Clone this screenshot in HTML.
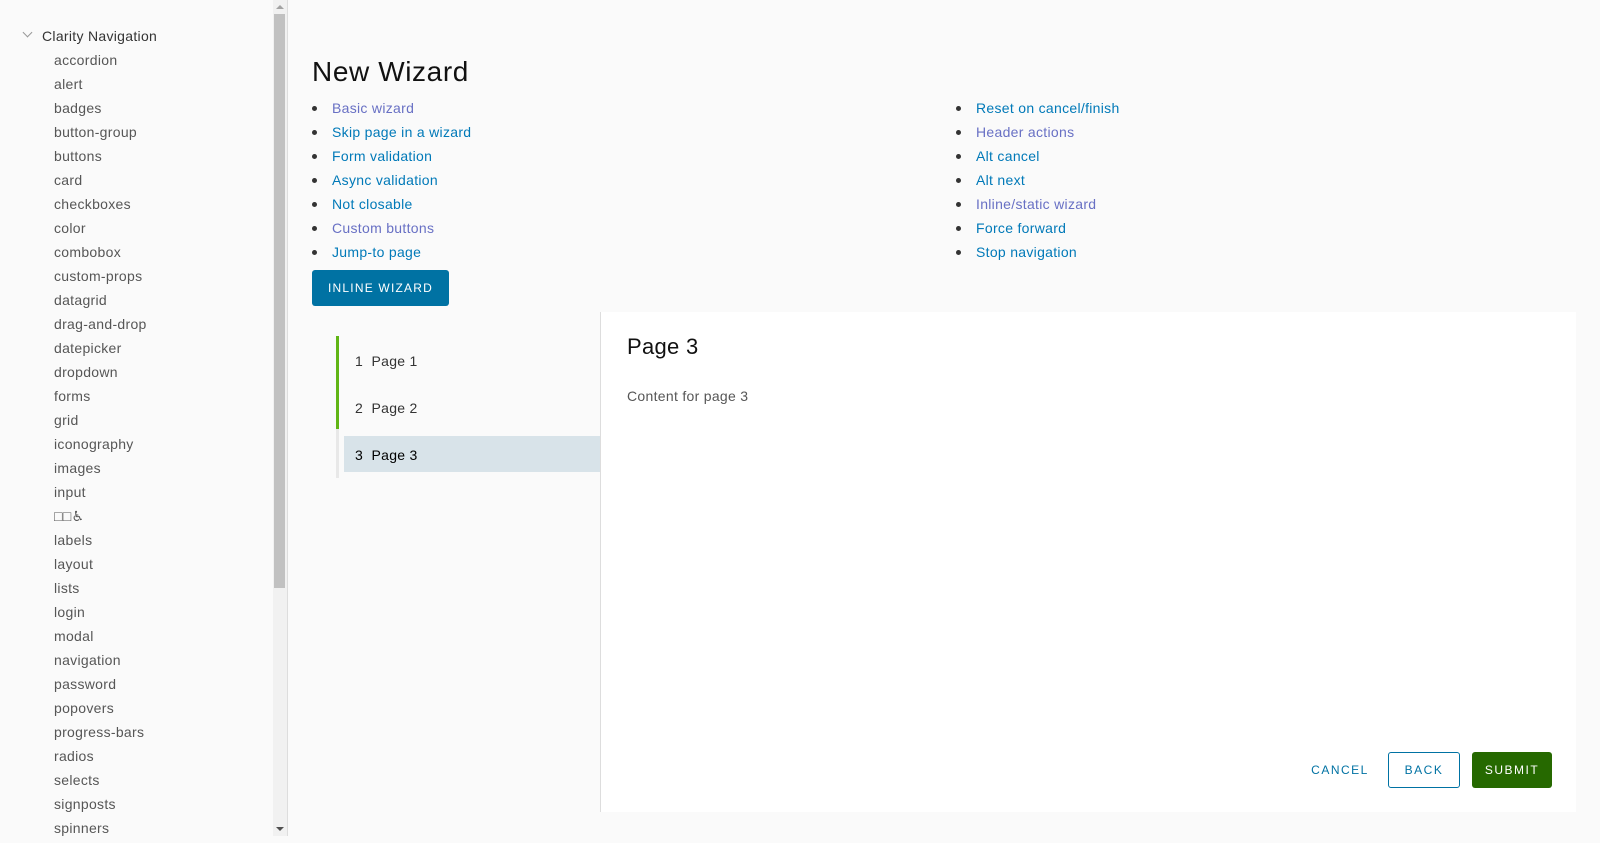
<!DOCTYPE html>
<html><head><meta charset="utf-8"><style>
*{box-sizing:border-box;margin:0;padding:0}
body{width:1600px;height:836px;overflow:hidden;background:#fafafa;font-family:"Liberation Sans",sans-serif;color:#565656;position:relative;letter-spacing:0.3px}
.side{position:absolute;left:0;top:0;width:288px;height:836px;background:#fafafa;border-right:1px solid #ddd}
.side .hd{position:absolute;left:42px;top:28px;font-size:14px;color:#333}
.side .chev{position:absolute;left:24px;top:29px;width:7px;height:7px;border-right:1px solid #999;border-bottom:1px solid #999;transform:rotate(45deg)}
.side ul{list-style:none;position:absolute;left:54px;top:51px}
.side li{height:24px;line-height:18px;font-size:14px;color:#565656}
.sb{position:absolute;left:273px;top:0;width:14px;height:836px;background:#f1f1f1}
.sb .th{position:absolute;left:1px;top:14px;width:11px;height:574px;background:#c1c1c1}
.sb .up,.sb .dn{position:absolute;left:3px;width:0;height:0;border-left:4px solid transparent;border-right:4px solid transparent}
.sb .up{top:5px;border-bottom:4px solid #a3a3a3}
.sb .dn{bottom:5px;border-top:4px solid #505050}
h1{position:absolute;left:312px;top:56px;font-size:28px;font-weight:normal;color:#111;letter-spacing:0.6px}
.lst{position:absolute;top:99px;list-style:none}
.lst li{height:24px;line-height:18px;font-size:14px;color:#0079b8;position:relative;padding-left:20px}
.lst li:before{content:"";position:absolute;left:0;top:7px;width:5px;height:5px;border-radius:50%;background:#333}
.lst li.v{color:#6870c4}
.btn{position:absolute;left:312px;top:270px;width:137px;height:36px;background:#0072a3;border-radius:3px;color:#fff;font-size:12px;letter-spacing:1.2px;text-align:center;line-height:36px}
.panel{position:absolute;left:600px;top:312px;width:976px;height:500px;background:#fff;border-left:1px solid #ddd}
.gl{position:absolute;left:336px;top:336px;width:3px;height:93px;background:#60b515}
.gr{position:absolute;left:336px;top:429px;width:3px;height:49px;background:#e8e8e8}
.st{position:absolute;left:355px;font-size:14px;color:#333}
.act{position:absolute;left:344px;top:436px;width:256px;height:36px;background:#d8e3e9}
.p3{position:absolute;left:627px;top:334px;font-size:22px;color:#111}
.ct{position:absolute;left:627px;top:388px;font-size:14px}
.b{position:absolute;top:752px;height:36px;line-height:36px;font-size:12px;letter-spacing:1.5px;text-align:center;border-radius:3px}
</style></head><body>
<div class="side"><div class="chev"></div><div class="hd">Clarity Navigation</div>
<ul><li>accordion</li><li>alert</li><li>badges</li><li>button-group</li><li>buttons</li><li>card</li><li>checkboxes</li><li>color</li><li>combobox</li><li>custom-props</li><li>datagrid</li><li>drag-and-drop</li><li>datepicker</li><li>dropdown</li><li>forms</li><li>grid</li><li>iconography</li><li>images</li><li>input</li><li>□□&#9855;&#xFE0E;</li><li>labels</li><li>layout</li><li>lists</li><li>login</li><li>modal</li><li>navigation</li><li>password</li><li>popovers</li><li>progress-bars</li><li>radios</li><li>selects</li><li>signposts</li><li>spinners</li></ul>
<div class="sb"><div class="up"></div><div class="th"></div><div class="dn"></div></div></div>
<h1>New Wizard</h1>
<ul class="lst" style="left:312px"><li class="v">Basic wizard</li><li>Skip page in a wizard</li><li>Form validation</li><li>Async validation</li><li>Not closable</li><li class="v">Custom buttons</li><li>Jump-to page</li></ul>
<ul class="lst" style="left:956px"><li>Reset on cancel/finish</li><li class="v">Header actions</li><li>Alt cancel</li><li>Alt next</li><li class="v">Inline/static wizard</li><li>Force forward</li><li>Stop navigation</li></ul>
<div class="btn">INLINE WIZARD</div>
<div class="panel"></div>
<div class="gl"></div><div class="gr"></div><div class="act"></div>
<div class="st" style="top:353px">1&nbsp; Page 1</div>
<div class="st" style="top:400px">2&nbsp; Page 2</div>
<div class="st" style="top:447px;color:#000">3&nbsp; Page 3</div>
<div class="p3">Page 3</div>
<div class="ct">Content for page 3</div>
<div class="b" style="left:1302px;width:76px;color:#0072a3">CANCEL</div>
<div class="b" style="left:1388px;width:72px;border:1px solid #0072a3;color:#0072a3;line-height:34px">BACK</div>
<div class="b" style="left:1472px;width:80px;background:#266900;color:#fff">SUBMIT</div>
</body></html>
